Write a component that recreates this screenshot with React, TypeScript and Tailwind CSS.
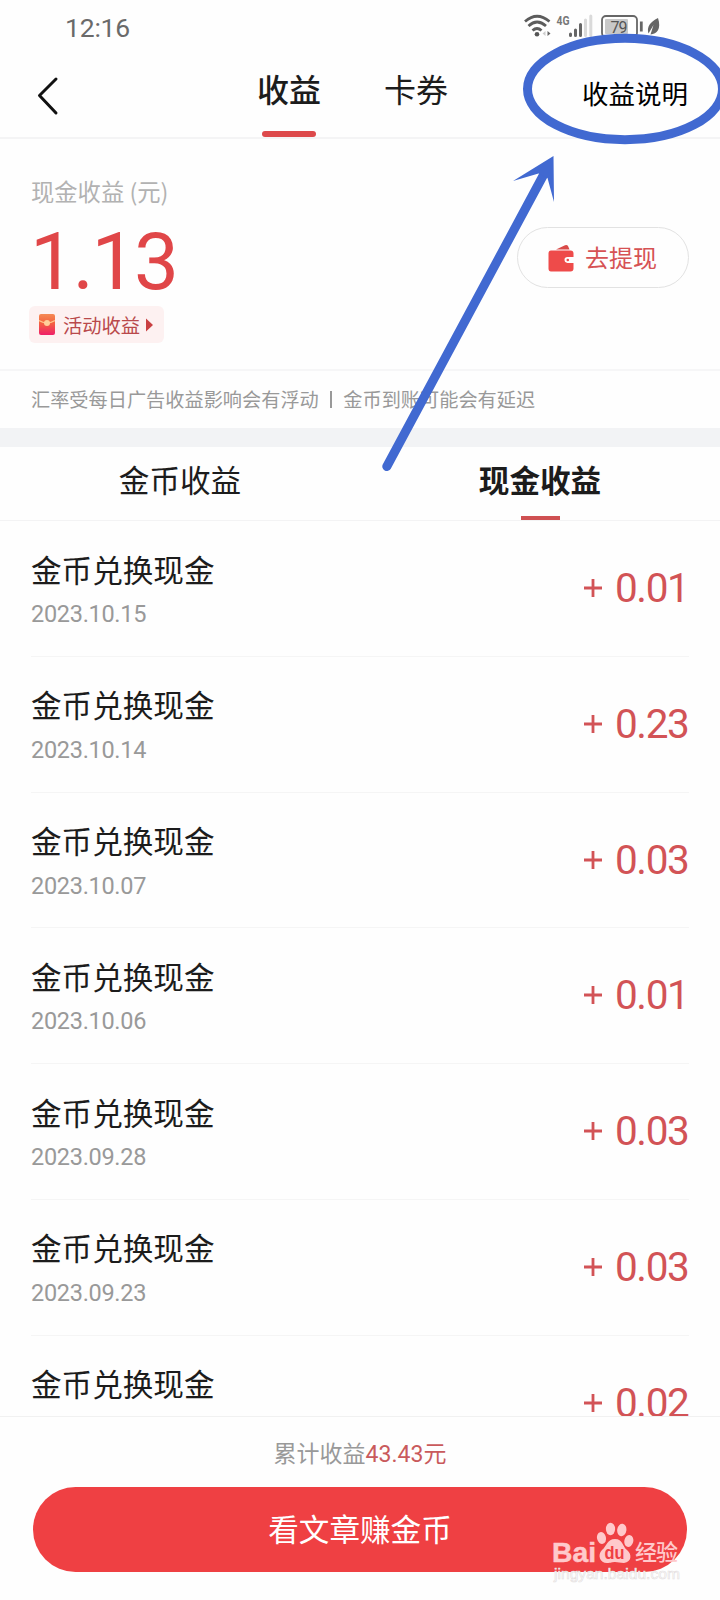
const rows = [
  { date: '2023.10.15', amount: '0.01' },
  { date: '2023.10.14', amount: '0.23' },
  { date: '2023.10.07', amount: '0.03' },
  { date: '2023.10.06', amount: '0.01' },
  { date: '2023.09.28', amount: '0.03' },
  { date: '2023.09.23', amount: '0.03' },
  { date: '', amount: '0.02' },
];

function StatusIcons() {
  return (
    <svg width="150" height="40" viewBox="515 8 150 40" fill="none">
      <g stroke="#5c5c5c" strokeWidth="2.8">
        <path d="M525 21.5Q537 11 549.500 21.500" />
        <path d="M528.500 26Q537 18 546 26" />
        <path d="M532.500 30.500Q537 26.500 541.500 30.500" />
      </g>
      <circle cx="537" cy="34.300" r="2.300" fill="#555" />
      <path d="M545.500 31v5l-3-2.500z" fill="#ccc" />
      <path d="M547.500 31v5l3-2.500z" fill="#666" />
      <text x="556.500" y="25" fontSize="13" fontWeight="700" fill="#777" textLength="13" lengthAdjust="spacingAndGlyphs" fontFamily="Roboto, sans-serif">4G</text>
      <g strokeWidth="3" strokeLinecap="round">
        <path d="M570.500 34v1.500M575.500 30v5.500M580.500 24.500v11" stroke="#666" />
        <path d="M585.500 20v15.500M590.800 16v19.500" stroke="#dadada" />
      </g>
      <rect x="602" y="16" width="35" height="21" rx="4" stroke="#666" strokeWidth="1.800" />
      <rect x="605" y="19" width="23" height="15" rx="1" fill="#c8c8c8" />
      <text x="610.500" y="32.500" fontSize="16" fill="#555" fontFamily="Roboto, sans-serif" textLength="17">79</text>
      <path d="M641.300 21.500v10" stroke="#666" strokeWidth="2.800" />
      <path d="M658 18C650 22 646.500 27 648.500 33.500L653.500 25L650.500 34.500C657 34 661.500 29 658 18Z" fill="#666" />
    </svg>
  );
}

function Wallet() {
  return (
    <svg width="26" height="28" viewBox="0 0 26 28">
      <path d="M8 5.500L17 1.200Q19 .3 20 2L21.500 5.500Z" fill="#d94a48" />
      <path d="M3 6.500H22.500Q25.500 6.500 25.500 9.500V13H19.500Q16.500 13 16.500 15.800T19.500 19H25.500V24.500Q25.500 27.500 22.500 27.500H3Q.5 27.500 .5 24.500V9.500Q.5 6.500 3 6.500Z" fill="#ee4b4a" />
      <circle cx="19.800" cy="16" r="1.300" fill="#ee4b4a" />
    </svg>
  );
}

function Packet() {
  return (
    <svg width="16" height="21" viewBox="0 0 16 21">
      <defs>
        <linearGradient id="packet" x1="0" y1="0" x2="0" y2="1">
          <stop offset="0" stopColor="#f58a55" />
          <stop offset=".4" stopColor="#f4663f" />
          <stop offset="1" stopColor="#ee2069" />
        </linearGradient>
      </defs>
      <rect width="16" height="21" rx="2" fill="url(#packet)" />
      <path d="M0 6.500Q8 11.500 16 6.500" stroke="#ffc48a" strokeWidth="1.200" fill="none" />
      <circle cx="8" cy="9" r="3" fill="#ffd09a" />
    </svg>
  );
}

function Annotation() {
  return (
    <svg className="pointer-events-none absolute inset-0" width="720" height="500" viewBox="0 0 720 500" fill="none">
      <ellipse cx="625" cy="89" rx="97.500" ry="50.700" stroke="#4169d1" strokeWidth="9" />
      <path d="M386.800 466.500L544 174" stroke="#4169d1" strokeWidth="9" strokeLinecap="round" />
      <path d="M553.500 156L513 181L538.500 173.500L547.500 178L554 202Z" fill="#4169d1" />
    </svg>
  );
}

function Watermark() {
  return (
    <svg className="pointer-events-none absolute bottom-2.5 left-[540px]" width="150" height="75" viewBox="540 1515 150 75">
      <g fill="#ffc9cb">
        <text x="552" y="1561.500" fontSize="28.500" fontWeight="700" stroke="#ffc9cb" strokeWidth=".5" textLength="44" lengthAdjust="spacingAndGlyphs" fontFamily="'Liberation Sans', sans-serif">Bai</text>
        <ellipse cx="601.500" cy="1538" rx="4.500" ry="6" transform="rotate(-14 601.500 1538)" />
        <ellipse cx="610.500" cy="1529" rx="4.600" ry="6.200" />
        <ellipse cx="621.800" cy="1530" rx="4.600" ry="6.200" transform="rotate(8 621.800 1530)" />
        <ellipse cx="628.800" cy="1541" rx="4.500" ry="6" transform="rotate(14 628.800 1541)" />
        <path d="M615 1539C607 1539 607 1546 602 1550C597 1555 600 1563 607 1563C611 1563 612 1562 615 1562C618 1562 620 1563 624 1563C632 1562 632 1554 627 1550C622 1546 623 1539 615 1539Z" />
        <text x="635" y="1560" fontSize="22" fontWeight="500" textLength="43" fontFamily="'Noto Sans CJK SC', sans-serif">经验</text>
      </g>
      <text x="604.500" y="1559" fontSize="18" fontWeight="700" fill="#ef4043" textLength="20" lengthAdjust="spacingAndGlyphs" fontFamily="'Liberation Sans', sans-serif">du</text>
      <text x="554" y="1579" fontSize="15" fill="#fff" stroke="#e4dede" strokeWidth=".6" textLength="126" lengthAdjust="spacingAndGlyphs" fontFamily="'Liberation Sans', sans-serif">jingyan.baidu.com</text>
    </svg>
  );
}

export default function App() {
  return (
    <div className="relative flex h-[1600px] w-[720px] flex-col overflow-hidden bg-[#fefefe] font-['Noto_Sans_CJK_SC',sans-serif] text-[#1c1c1c]">
      <header className="h-[139px] shrink-0 border-b-2 border-[#f4f4f5]">
        <div className="flex h-12 items-start justify-between pt-2 pr-[55px] pl-[65px]">
          <span className="font-[Roboto] text-[26.5px] leading-[39px] tracking-[-0.2px] text-[#6a6a6a]">12:16</span>
          <StatusIcons />
        </div>
        <div className="grid h-[88px] grid-cols-[258px_62px_64px_63px_136px_1fr] items-start">
          <svg className="mt-[28px] ml-[36px]" width="24" height="40" viewBox="0 0 24 40" fill="none" stroke="#111" strokeWidth="3" strokeLinecap="round" strokeLinejoin="round">
            <path d="M20 3L3.500 19.500L20 37" />
          </svg>
          <div className="flex flex-col items-center">
            <span className="mt-[20px] text-[32px] leading-[40px] font-medium whitespace-nowrap">收益</span>
            <span className="mt-[23px] h-1.5 w-[54px] rounded-full bg-[#dd494b]" />
          </div>
          <span />
          <span className="mt-[20px] text-[32px] leading-[40px] whitespace-nowrap">卡券</span>
          <span />
          <span className="mt-[25px] -ml-px text-[26.5px] leading-[40px] whitespace-nowrap text-black">收益说明</span>
        </div>
      </header>

      <section className="flex h-[232px] shrink-0 items-start justify-between border-b-2 border-[#f6f6f7] pr-[31px] pl-[29px]">
        <div className="flex flex-col items-start">
          <span className="mt-[36px] ml-0.5 text-[23.3px] leading-[32px] text-[#b2b2b2]">现金收益 (元)</span>
          <span className="mt-[15px] ml-px h-[78px] font-[Roboto] text-[80px] leading-[80px] tracking-[-2.3px] text-[#e04648]">1.13</span>
          <div className="mt-[6px] flex h-[37px] w-[135px] items-center rounded-md bg-[#fdf1f1] pl-[10px]">
            <Packet />
            <span className="ml-2 text-[19.3px] leading-[36px] whitespace-nowrap text-[#b9494b]">活动收益</span>
            <svg className="ml-1.5" width="8" height="14" viewBox="0 0 8 14"><path d="M0 .5L7 7L0 13.500Z" fill="#c94042" /></svg>
          </div>
        </div>
        <button className="mt-[88px] flex h-[61px] w-[172px] items-center rounded-full border border-[#e2e2e2] pl-[30px]">
          <Wallet />
          <span className="-mt-0.5 ml-[11px] text-[24px] leading-[40px] text-[#d65254]">去提现</span>
        </button>
      </section>

      <div className="flex h-[57px] shrink-0 items-center pl-[31px] text-[19.2px] whitespace-nowrap text-[#999]">
        <span>汇率受每日广告收益影响会有浮动</span>
        <span className="mx-[11.5px] h-[17px] w-[1.5px] bg-[#999]" />
        <span>金币到账可能会有延迟</span>
      </div>
      <div className="h-[19px] shrink-0 bg-[#f2f3f5]" />

      <nav className="grid h-[74px] shrink-0 grid-cols-2 border-b border-[#f3f3f4] text-[30.6px] leading-[44px]">
        <span className="mt-[10px] text-center">金币收益</span>
        <div className="flex flex-col items-center">
          <span className="mt-[10px] font-bold">现金收益</span>
          <span className="mt-[15px] h-[4px] w-[39px] shrink-0 bg-[#cf5052]" />
        </div>
      </nav>

      <main className="h-[895px] shrink-0 overflow-hidden px-[31px]">
        {rows.map((row, i) => (
          <div key={i} className="flex h-[135.75px] justify-between border-b border-[#f5f5f5]">
            <div className="flex flex-col">
              <span className="mt-[25.5px] text-[30.6px] leading-[44px]">金币兑换现金</span>
              {row.date && <span className="mt-[7.5px] font-[Roboto] text-[23.5px] leading-[32px] tracking-[-0.3px] text-[#999]">{row.date}</span>}
            </div>
            <div className="flex h-[60px] w-[106px] pt-[37px] font-[Roboto] leading-[60px] text-[#d25356]">
              <svg className="mt-[20px] mr-[12px] shrink-0" width="20" height="20" viewBox="0 0 20 20" stroke="#d25356" strokeWidth="2.800"><path d="M1 10H19M10 1V19" /></svg>
              <span className="text-[40.5px] tracking-[-1.4px]">{row.amount}</span>
            </div>
          </div>
        ))}
      </main>

      <footer className="flex flex-1 flex-col items-center border-t border-[#f1f1f1] bg-[#fefefe]">
        <p className="mt-[19px] h-[32px] text-[23px] leading-[32px] text-[#999]">
          累计收益<span className="font-[Roboto,'Noto_Sans_CJK_SC',sans-serif] text-[#c95a5c]">43.43元</span>
        </p>
        <button className="mt-[19px] h-[85px] w-[654px] rounded-full bg-[#ef4043] pb-0.5 text-[30.6px] text-white">看文章赚金币</button>
      </footer>

      <Annotation />
      <Watermark />
    </div>
  );
}
